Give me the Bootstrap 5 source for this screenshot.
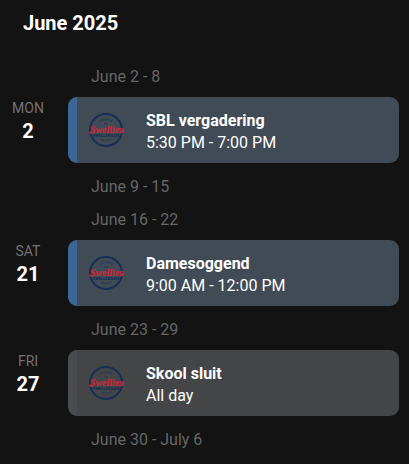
<!DOCTYPE html>
<html lang="en">
<head>
<meta charset="utf-8">
<meta name="viewport" content="width=device-width, initial-scale=1">
<title>Schedule</title>
<link href="https://cdn.jsdelivr.net/npm/bootstrap@5.3.0/dist/css/bootstrap.min.css" rel="stylesheet">
<style>
body { background: #131313; color: #fff; font-family: Roboto, "Liberation Sans", sans-serif; font-size: 16px; line-height: 22px; }
.month { font-size: 20px; line-height: 24px; font-weight: 700; padding: 11px 23px 24px; }
.week { color: #666; font-size: 16px; line-height: 31px; padding: 2px 0 0 91px; font-weight: 400; }
.agenda-row { padding: 5px 10px 6px 0; }
.day { width: 56px; margin-right: 12px; padding-top: 1px; }
.day-name { color: #727272; font-size: 14px; line-height: 20px; }
.day-number { font-size: 20px; line-height: 26px; font-weight: 700; }
.event { min-height: 66px; background: #404b56; border-radius: 9px; border-left: 9px solid #3b6797; padding-left: 12px; }
.event-muted { background: #444547; border-left-color: #494b4f; }
.event-title { font-size: 16px; line-height: 22px; font-weight: 700; }
.event-text { padding-top: 3px; }
.crest { width: 36px; height: 36px; margin-right: 21px; }
</style>
<script src="https://cdn.jsdelivr.net/npm/bootstrap@5.3.0/dist/js/bootstrap.bundle.min.js"></script>
</head>
<body>
<svg class="d-none" aria-hidden="true">
  <symbol id="crest" viewBox="0 0 36 36">
    <circle cx="17" cy="18" r="16" fill="none" stroke="#172f55" stroke-width="2"/>
    <path d="M10.500 9.700Q17 4.800 23.500 9.700" fill="none" stroke="#263b58" stroke-width="1.800" stroke-dasharray="1.200 .6"/>
    <path d="M15 11.800h4" stroke="#263b58" stroke-width="1.200"/>
    <path d="M12 27.200Q17 29.500 22.500 27.200" fill="none" stroke="#263b58" stroke-width="2" stroke-dasharray="1.300 .6"/>
    <text x="17" y="25" text-anchor="middle" font-family="Roboto, sans-serif" font-size="4" font-weight="900" fill="#172f55">SWELLENDAM</text>
    <text x="17.500" y="20.500" text-anchor="middle" font-family="Liberation Serif, serif" font-size="10" font-style="italic" font-weight="700" fill="#c8283a" stroke="#c8283a" stroke-width=".2">Swellies</text>
    <path d="M0 20.200Q2 22 5 20.500M31 20.400Q34 21 35 17.500" fill="none" stroke="#c8283a" stroke-width="1.300"/>
  </symbol>
</svg>
<main class="container-fluid p-0">
  <h1 class="month m-0">June 2025</h1>
  <h2 class="week m-0">June 2 - 8</h2>
  <div class="agenda-row d-flex">
    <div class="day text-center flex-shrink-0"><div class="day-name">MON</div><div class="day-number">2</div></div>
    <article class="event d-flex align-items-center flex-grow-1">
      <svg class="crest flex-shrink-0" role="img" aria-label="Swellies"><use href="#crest"/></svg>
      <div class="event-text"><h3 class="event-title m-0">SBL vergadering</h3><div>5:30 PM - 7:00 PM</div></div>
    </article>
  </div>
  <h2 class="week m-0">June 9 - 15</h2>
  <h2 class="week m-0">June 16 - 22</h2>
  <div class="agenda-row d-flex">
    <div class="day text-center flex-shrink-0"><div class="day-name">SAT</div><div class="day-number">21</div></div>
    <article class="event d-flex align-items-center flex-grow-1">
      <svg class="crest flex-shrink-0" role="img" aria-label="Swellies"><use href="#crest"/></svg>
      <div class="event-text"><h3 class="event-title m-0">Damesoggend</h3><div>9:00 AM - 12:00 PM</div></div>
    </article>
  </div>
  <h2 class="week m-0">June 23 - 29</h2>
  <div class="agenda-row d-flex">
    <div class="day text-center flex-shrink-0"><div class="day-name">FRI</div><div class="day-number">27</div></div>
    <article class="event event-muted d-flex align-items-center flex-grow-1">
      <svg class="crest flex-shrink-0" role="img" aria-label="Swellies"><use href="#crest"/></svg>
      <div class="event-text"><h3 class="event-title m-0">Skool sluit</h3><div>All day</div></div>
    </article>
  </div>
  <h2 class="week m-0">June 30 - July 6</h2>
</main>
</body>
</html>
